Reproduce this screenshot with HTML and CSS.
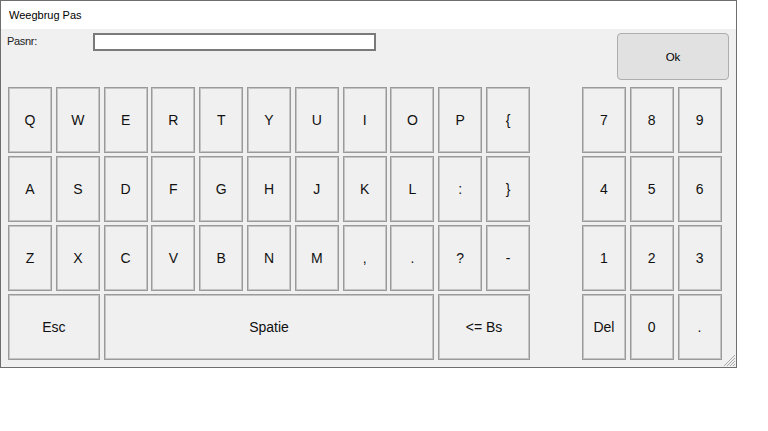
FILE: index.html
```html
<!DOCTYPE html>
<html>
<head>
<meta charset="utf-8">
<link rel="stylesheet" href="styles.css">
</head>
<body>
<div class="window">
  <div class="titlebar">Weegbrug Pas</div>
  <div class="content">
    <div class="top">
      <span class="label">Pasnr:</span>
      <div class="input"></div>
      <button class="ok">Ok</button>
    </div>
    <div class="keyboard">
      <div class="main">
        <button class="key">Q</button><button class="key">W</button><button class="key">E</button><button class="key">R</button><button class="key">T</button><button class="key">Y</button><button class="key">U</button><button class="key">I</button><button class="key">O</button><button class="key">P</button><button class="key">{</button>
        <button class="key">A</button><button class="key">S</button><button class="key">D</button><button class="key">F</button><button class="key">G</button><button class="key">H</button><button class="key">J</button><button class="key">K</button><button class="key">L</button><button class="key">:</button><button class="key">}</button>
        <button class="key">Z</button><button class="key">X</button><button class="key">C</button><button class="key">V</button><button class="key">B</button><button class="key">N</button><button class="key">M</button><button class="key">,</button><button class="key">.</button><button class="key">?</button><button class="key">-</button>
        <button class="key span2">Esc</button><button class="key span7">Spatie</button><button class="key span2">&lt;= Bs</button>
      </div>
      <div class="numpad">
        <button class="key">7</button><button class="key">8</button><button class="key">9</button>
        <button class="key">4</button><button class="key">5</button><button class="key">6</button>
        <button class="key">1</button><button class="key">2</button><button class="key">3</button>
        <button class="key">Del</button><button class="key">0</button><button class="key">.</button>
      </div>
    </div>
  </div>
  <svg class="grip" width="14" height="14" viewBox="0 0 14 14">
    <line x1="13" y1="2" x2="2" y2="13" stroke="#a8a8a8" stroke-width="1"/>
    <line x1="13" y1="5" x2="5" y2="13" stroke="#a8a8a8" stroke-width="1"/>
    <line x1="13" y1="8" x2="8" y2="13" stroke="#a8a8a8" stroke-width="1"/>
    <line x1="13" y1="11" x2="11" y2="13" stroke="#a8a8a8" stroke-width="1"/>
  </svg>
</div>
</body>
</html>
```
FILE: styles.css
```css
html, body {
  margin: 0;
  padding: 0;
  background: #ffffff;
}
body {
  font-family: "Liberation Sans", Arial, sans-serif;
}
.window {
  position: relative;
  box-sizing: border-box;
  width: 737px;
  height: 368px;
  border: 1px solid #6e6e6e;
  background: #f0f0f0;
  display: flex;
  flex-direction: column;
}
.titlebar {
  height: 28px;
  background: #ffffff;
  padding-left: 8px;
  display: flex;
  align-items: center;
  font-size: 11px;
  color: #000;
}
.content {
  padding: 4px 7px 0 6px;
}
.top {
  display: flex;
  align-items: flex-start;
  height: 47px;
}
.label {
  width: 86px;
  margin-top: 2px;
  font-size: 11px;
  letter-spacing: -0.3px;
  color: #222;
}
.input {
  box-sizing: border-box;
  width: 283px;
  height: 18px;
  background: #fff;
  border: 2px solid #7a7a7a;
}
.ok {
  margin-left: auto;
  box-sizing: border-box;
  width: 112px;
  height: 47px;
  background: #e1e1e1;
  border: 1px solid #adadad;
  border-radius: 4px;
  font-family: "Liberation Sans", Arial, sans-serif;
  font-size: 11.5px;
  color: #000;
  padding: 0;
}
.keyboard {
  display: flex;
  margin-top: 7px;
  margin-left: 1px;
  gap: 52px;
}
.main {
  display: grid;
  grid-template-columns: repeat(11, 44px);
  grid-auto-rows: 66px;
  column-gap: 3.8px;
  row-gap: 3px;
}
.numpad {
  display: grid;
  grid-template-columns: repeat(3, 44px);
  grid-auto-rows: 66px;
  column-gap: 3.8px;
  row-gap: 3px;
}
.key {
  box-sizing: border-box;
  margin: 0;
  padding: 0;
  background: #f0f0f0;
  border: 1px solid #9a9a9a;
  box-shadow: inset 0 0 0 1px #c4c4c4;
  border-radius: 0;
  font-family: "Liberation Sans", Arial, sans-serif;
  font-size: 14px;
  color: #111;
}
.span2 { grid-column: span 2; }
.span7 { grid-column: span 7; }
.grip {
  position: absolute;
  right: 0;
  bottom: 0;
}
```
